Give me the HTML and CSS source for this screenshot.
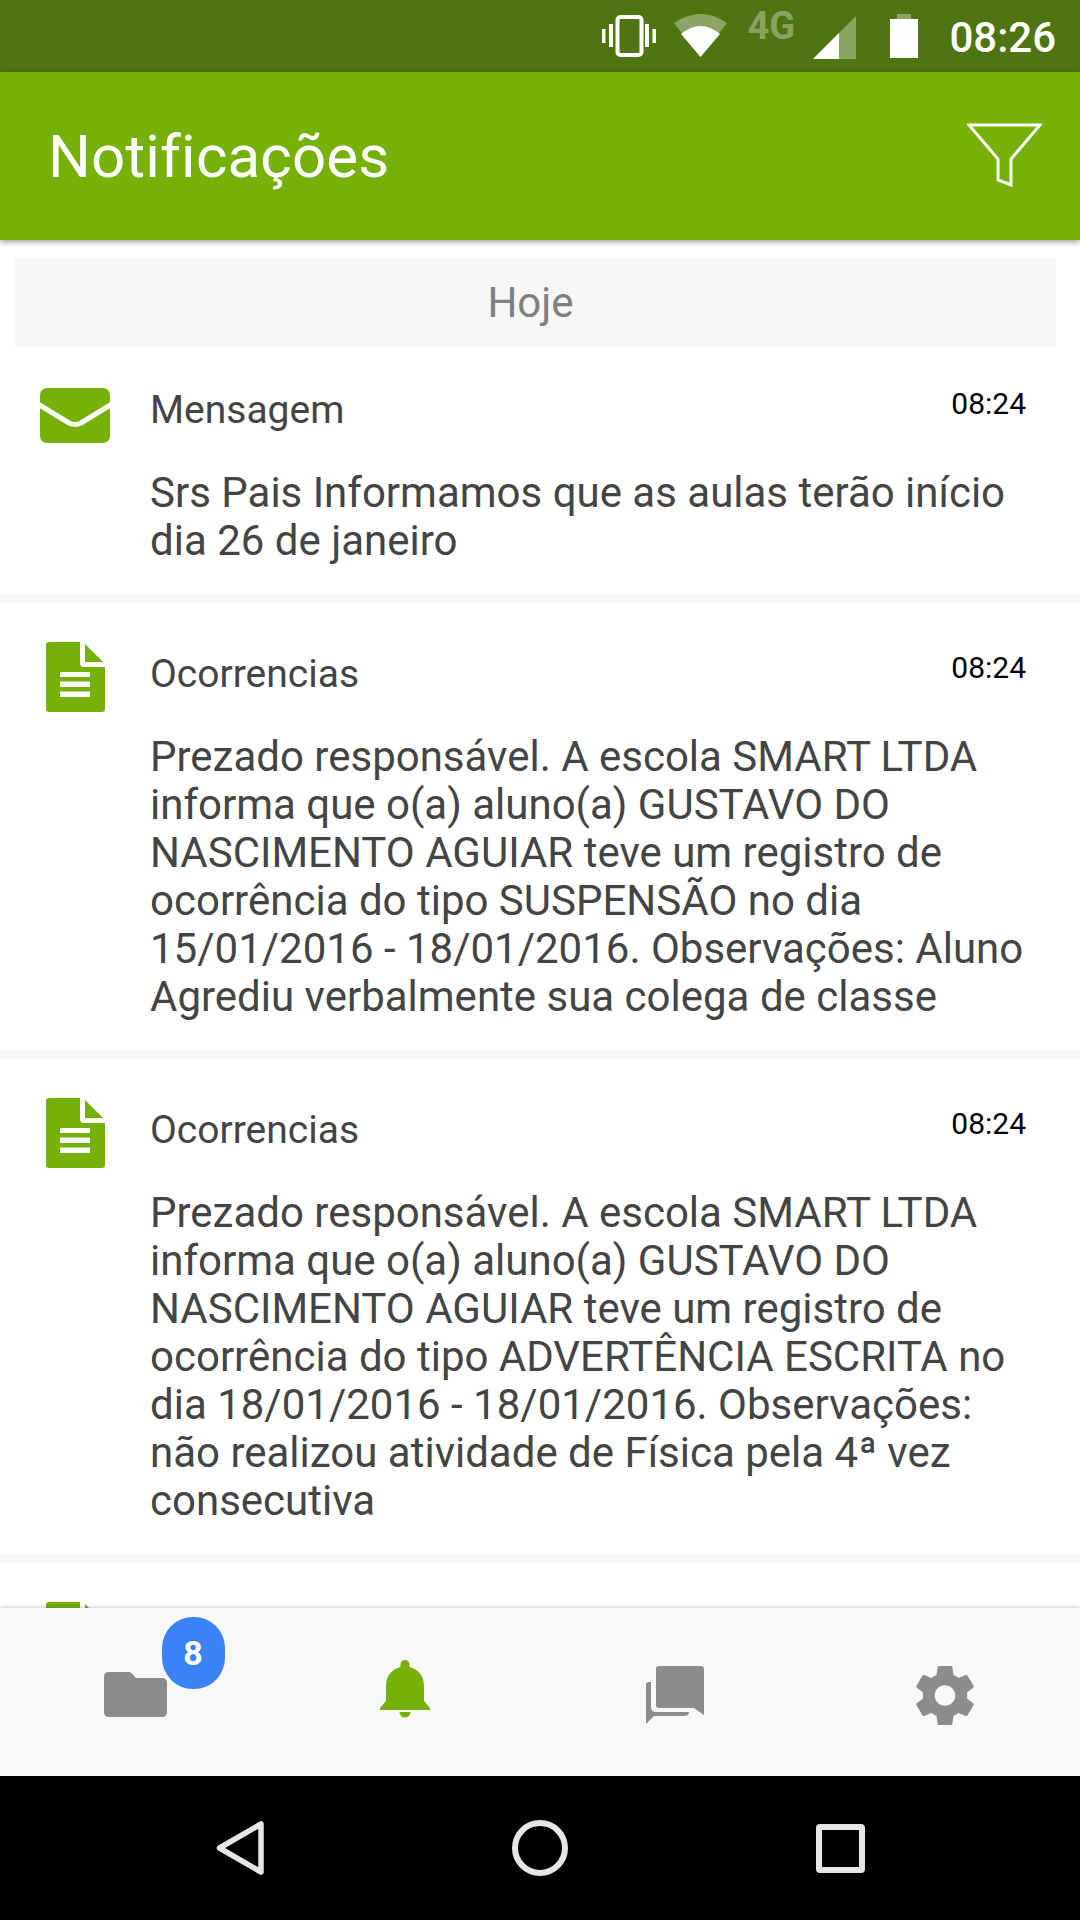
FILE: index.html
```html
<!DOCTYPE html>
<html lang="pt-BR">
<head>
<meta charset="utf-8">
<title>Notificações</title>
<link rel="stylesheet" href="styles.css">
</head>
<body>
<div class="screen">
  <div class="status-bar">
    <svg class="si-vibrate" viewBox="0 0 54 42" width="54" height="42"><rect x="15.500" y="2" width="24" height="38" rx="3" fill="none" stroke="#fff" stroke-width="4"/><path fill="#fff" d="M0 14h3.500v14H0zM7 9h4v23H7zM43 9h4v23h-4zM50.500 14H54v14h-3.500z"/></svg>
    <svg class="si-wifi" viewBox="0 0 53 43" width="53" height="43"><path fill="#fff" fill-opacity=".35" d="M0 9Q26.500-9 53 9L26.500 43Z"/><path fill="#fff" d="M7 20Q26.500 4 46 20L26.500 43Z"/></svg>
    <span class="si-4g">4G</span>
    <svg class="si-signal" viewBox="0 0 43 43" width="43" height="43"><path fill="#fff" fill-opacity=".35" d="M0 43 43 0V43Z"/><path fill="#fff" d="M0 43 26 17V43Z"/></svg>
    <svg class="si-battery" viewBox="0 0 28 44" width="28" height="44"><path fill="#fff" fill-opacity=".35" d="M7 0h14v5H7z"/><path fill="#fff" d="M0 5h28v39H0z"/></svg>
    <span class="clock">08:26</span>
  </div>

  <header class="app-bar">
    <h1 class="app-title">Notificações</h1>
    <svg class="filter-icon" viewBox="0 0 75 64" width="75" height="64"><path fill="none" stroke="#fff" stroke-width="3" d="M2 2H73L44 36V62L31 57V36Z"/></svg>
  </header>

  <main class="content">
    <div class="day-section"><div class="day-band">Hoje</div></div>

    <article class="card card-first">
      <svg class="card-icon icon-mail" viewBox="0 0 70 55" width="70" height="55"><rect width="70" height="55" rx="7" fill="#76b009"/><path fill="none" stroke="#fff" stroke-width="5" d="M-2 16 29 35Q35 38 41 35L72 16"/></svg>
      <div class="card-main">
        <div class="card-head"><span class="card-title">Mensagem</span><time class="card-time">08:24</time></div>
        <p class="card-text">Srs Pais Informamos que as aulas terão início dia 26 de janeiro</p>
      </div>
    </article>

    <article class="card">
      <svg class="card-icon icon-doc" viewBox="0 0 59 70" width="59" height="70"><use href="#doc"/></svg>
      <div class="card-main">
        <div class="card-head"><span class="card-title">Ocorrencias</span><time class="card-time">08:24</time></div>
        <p class="card-text">Prezado responsável. A escola SMART LTDA informa que o(a) aluno(a) GUSTAVO DO NASCIMENTO AGUIAR teve um registro de ocorrência do tipo SUSPENSÃO no dia 15/01/2016 - 18/01/2016. Observações: Aluno Agrediu verbalmente sua colega de classe</p>
      </div>
    </article>

    <article class="card">
      <svg class="card-icon icon-doc" viewBox="0 0 59 70" width="59" height="70"><use href="#doc"/></svg>
      <div class="card-main">
        <div class="card-head"><span class="card-title">Ocorrencias</span><time class="card-time">08:24</time></div>
        <p class="card-text">Prezado responsável. A escola SMART LTDA informa que o(a) aluno(a) GUSTAVO DO NASCIMENTO AGUIAR teve um registro de ocorrência do tipo ADVERTÊNCIA ESCRITA no dia 18/01/2016 - 18/01/2016. Observações: não realizou atividade de Física pela 4ª vez consecutiva</p>
      </div>
    </article>

    <article class="card">
      <svg class="card-icon icon-doc" viewBox="0 0 59 70" width="59" height="70"><use href="#doc"/></svg>
    </article>
  </main>

  <nav class="tab-bar">
    <div class="tab tab-folder">
      <svg viewBox="0 0 63 45" width="63" height="45"><path fill="#8c8c8c" d="M5 0H25Q27 0 28 1.500L32 6H58Q63 6 63 11V40Q63 45 58 45H5Q0 45 0 40V5Q0 0 5 0Z"/></svg>
      <span class="badge">8</span>
    </div>
    <div class="tab tab-bell">
      <svg viewBox="0 0 50 58" width="50" height="58"><path fill="#76b009" d="M25 0A4.500 4.500 0 0 1 29.500 4.500V7C38 9 44 16 44 26V41L50 48V50H0V48L6 41V26C6 16 12 9 20.500 7V4.500A4.500 4.500 0 0 1 25 0ZM19.500 52H30.500A5.500 5.500 0 0 1 19.500 52Z"/></svg>
    </div>
    <div class="tab tab-chat">
      <svg viewBox="0 0 58 58" width="58" height="58"><path fill="#8c8c8c" d="M13 0H55A3 3 0 0 1 58 3V49L48 42H13A3 3 0 0 1 10 39V3A3 3 0 0 1 13 0ZM5 16V41Q5 46 10 46H43Q43 50 38 50H8L0 58V19Q0 16 3 16Z"/></svg>
    </div>
    <div class="tab tab-gear">
      <svg viewBox="2.300 2 19.400 20" width="58" height="59"><path fill="#8c8c8c" d="M19.430 12.980c.04-.32.07-.64.07-.98s-.03-.66-.07-.98l2.110-1.650c.19-.15.24-.42.12-.64l-2-3.460c-.12-.22-.39-.3-.61-.22l-2.490 1c-.52-.4-1.080-.73-1.690-.98l-.38-2.650C14.460 2.180 14.250 2 14 2h-4c-.25 0-.46.18-.49.42l-.38 2.650c-.61.25-1.170.59-1.690.98l-2.490-1c-.23-.09-.49 0-.61.22l-2 3.460c-.13.22-.07.49.12.64l2.110 1.650c-.04.32-.07.65-.07.98s.03.66.07.98l-2.110 1.650c-.19.15-.24.42-.12.64l2 3.460c.12.22.39.3.61.22l2.490-1c.52.4 1.080.73 1.690.98l.38 2.650c.03.24.24.42.49.42h4c.25 0 .46-.18.49-.42l.38-2.650c.61-.25 1.170-.59 1.690-.98l2.490 1c.23.09.49 0 .61-.22l2-3.460c.12-.22.07-.49-.12-.64l-2.110-1.650zM12 15.500c-1.930 0-3.500-1.570-3.500-3.500s1.570-3.500 3.500-3.500 3.500 1.570 3.500 3.500-1.570 3.500-3.500 3.500z"/></svg>
    </div>
  </nav>

  <div class="system-nav">
    <svg viewBox="0 0 48 56" width="48" height="56"><path fill="none" stroke="#e6e6e6" stroke-width="5.500" stroke-linejoin="round" d="M3.500 28 45 4V52Z"/></svg>
    <span class="sys-home"></span>
    <span class="sys-recent"></span>
  </div>
</div>

<svg class="sprite" width="0" height="0" aria-hidden="true"><defs><g id="doc"><path fill="#76b009" d="M3 0H34V21Q34 25 38 25H59V67A3 3 0 0 1 56 70H3A3 3 0 0 1 0 67V3A3 3 0 0 1 3 0ZM39 2 57 20H39Z"/><path fill="#fff" d="M14 30H44V35H14ZM14 39.500H44V45H14ZM14 49.500H44V55H14Z"/></g></defs></svg>
</body>
</html>
```
FILE: styles.css
```css
* { box-sizing: border-box; }
html, body { margin: 0; padding: 0; }
body { width: 1080px; height: 1920px; overflow: hidden; background: #fff; font-family: Roboto, "Noto Sans", sans-serif; }
.sprite { position: absolute; }
.screen { width: 1080px; height: 1920px; display: flex; flex-direction: column; }

.status-bar { height: 72px; flex: none; background: #4f7411; display: flex; align-items: flex-start; justify-content: flex-end; padding-right: 24px; color: #fff; }
.si-vibrate { margin-top: 15px; }
.si-wifi { margin: 14px 0 0 18px; }
.si-4g { margin: 5px 0 0 20px; width: 51px; font-size: 38px; line-height: 43px; font-weight: 700; color: rgba(255,255,255,.35); white-space: nowrap; }
.si-signal { margin: 16px 0 0 15px; }
.si-battery { margin: 14px 0 0 34px; }
.clock { margin: 14px 0 0 31px; font-size: 42px; line-height: 47px; font-weight: 500; }

.app-bar { height: 168px; flex: none; background: #76b009; display: flex; align-items: center; justify-content: space-between; padding: 0 38px 0 48px; box-shadow: 0 2px 6px rgba(0,0,0,.4); position: relative; z-index: 2; }
.app-title { margin: 0; font-size: 60px; font-weight: 400; letter-spacing: .2px; color: #fff; }
.filter-icon { margin-bottom: 2px; }

.content { flex: 1; min-height: 0; overflow: hidden; display: flex; flex-direction: column; gap: 9px; background: #f7f7f7; }
.day-section { flex: none; padding: 18px 24px 0 15px; margin-bottom: -9px; background: #fff; }
.day-band { height: 89px; padding-right: 10px; background: #f7f7f7; font-size: 42px; line-height: 89px; color: #808080; text-align: center; }

.card { flex: none; background: #fff; display: flex; padding: 39px 0 0 0; }
.card-first { padding-top: 31px; }
.card-icon { flex: none; }
.icon-mail { margin: 10px 40px 0 40px; }
.icon-doc { margin: 0 45px 0 46px; }
.card-main { flex: 1; min-width: 0; padding: 0 54px 29px 0; }
.card-head { display: flex; justify-content: space-between; height: 58px; margin-bottom: 33px; }
.card-title { font-size: 39px; line-height: 64px; color: #444; }
.card-time { font-size: 30px; line-height: 51px; color: #000; }
.card-text { margin: 0; font-size: 42px; line-height: 48px; color: #444; }

.tab-bar { height: 168px; flex: none; background: #f8f8f8; display: grid; grid-template-columns: repeat(4, 1fr); justify-items: center; align-items: start; position: relative; z-index: 2; box-shadow: 0 -1px 4px rgba(0,0,0,.2); }
.tab { position: relative; display: flex; }
.tab-folder { margin-top: 64px; }
.tab-bell { margin-top: 52px; }
.tab-chat { margin-top: 58px; }
.tab-gear { margin-top: 58px; }
.badge { position: absolute; left: 58px; top: -55px; width: 63px; height: 72px; border-radius: 31px; background: #3b82f6; color: #fff; font-size: 34px; font-weight: 700; line-height: 72px; text-align: center; }

.system-nav { height: 144px; flex: none; background: #000; display: grid; grid-template-columns: repeat(3, 300px); justify-items: center; align-items: center; padding-left: 90px; }
.sys-home { width: 56px; height: 56px; border-radius: 50%; border: 6px solid #e6e6e6; }
.sys-recent { width: 49px; height: 49px; border-radius: 4px; border: 6px solid #e6e6e6; }
```
